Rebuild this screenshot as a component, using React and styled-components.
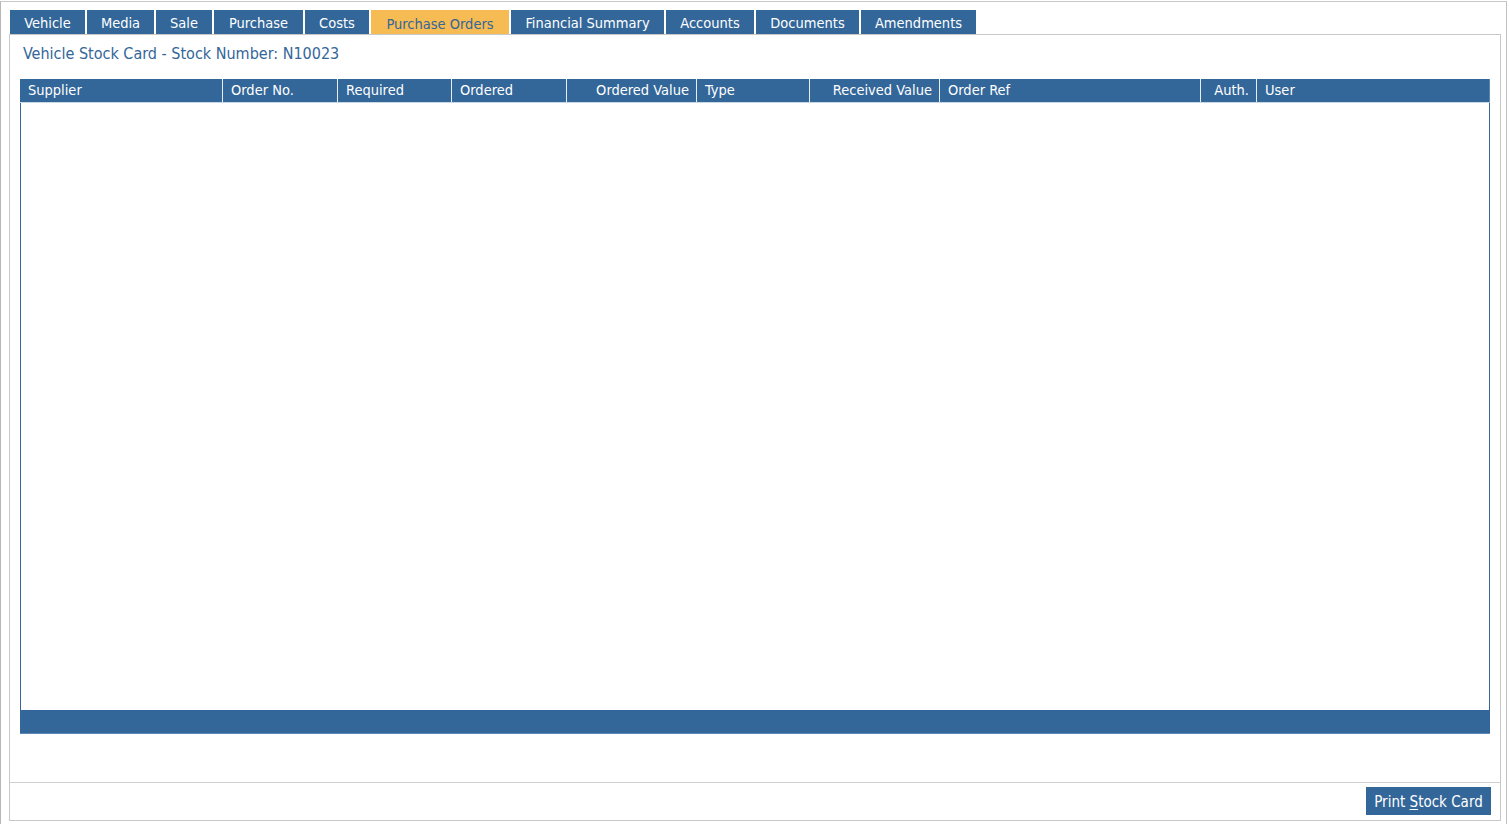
import React from "react";
import styled, { createGlobalStyle } from "styled-components";

const GlobalStyle = createGlobalStyle`
  html, body {
    margin: 0;
    padding: 0;
    background: #ffffff;
  }
  body {
    font-family: "DejaVu Sans Condensed", "DejaVu Sans", Verdana, sans-serif;
    font-size: 14px;
  }
`;

const BLUE = "#336699";
const GREY = "#c8c8c8";

const Frame = styled.div`
  box-sizing: border-box;
  width: 1507px;
  height: 823px;
  margin-top: 1px;
  border-top: 1px solid ${GREY};
  border-left: 1px solid #b8b8b8;
  border-right: 1px solid #c0c0c0;
  padding: 8px 5px 0 8px;
  display: flex;
  flex-direction: column;
`;

const TabStrip = styled.div`
  display: flex;
  padding-left: 1px;
  height: 24px;
`;

const Tab = styled.div`
  box-sizing: border-box;
  height: 24px;
  width: ${p => p.w}px;
  margin-right: 2px;
  display: flex;
  align-items: center;
  justify-content: center;
  font-size: 14.5px;
  color: ${p => (p.active ? BLUE : "#ffffff")};
  background: ${p => (p.active ? "#f7bb53" : BLUE)};
  padding-top: ${p => (p.active ? "3px" : "1px")};
  white-space: nowrap;
`;

const Panel = styled.div`
  box-sizing: border-box;
  flex: 0 0 787px;
  border: 1px solid ${GREY};
  display: flex;
  flex-direction: column;
`;

const Body = styled.div`
  flex: 0 0 748px;
  box-sizing: border-box;
  padding: 0 9px 0 10px;
  display: flex;
  flex-direction: column;
  border-bottom: 1px solid #cfcfcf;
`;

const Title = styled.div`
  height: 44px;
  padding: 9px 0 0 3px;
  box-sizing: border-box;
  font-size: 16px;
  color: ${BLUE};
`;

const Table = styled.div`
  width: 1470px;
  display: flex;
  flex-direction: column;
`;

const HeaderRow = styled.div`
  display: grid;
  grid-template-columns: 203px 115px 114px 115px 130px 113px 130px 261px 56px 233px;
  height: 23px;
  background: ${BLUE};
  border-bottom: 1px solid #c9d6e3;
  border-right: 1px solid #5a88b6;
`;

const HeadCell = styled.div`
  box-sizing: border-box;
  display: flex;
  align-items: center;
  justify-content: ${p => (p.right ? "flex-end" : "flex-start")};
  padding: 0 ${p => (p.right ? "7px" : "4px")} 1px ${p => (p.right ? "4px" : "8px")};
  color: #ffffff;
  font-size: 14.5px;
  white-space: nowrap;
  border-right: ${p => (p.last ? "none" : "1px solid #e6edf4")};
`;

const TableBody = styled.div`
  height: 607px;
  border-left: 1px solid ${BLUE};
  border-right: 1px solid ${BLUE};
  background: #ffffff;
`;

const TableFooter = styled.div`
  height: 23px;
  background: ${BLUE};
  border-bottom: 1px solid #5c89b7;
`;

const Actions = styled.div`
  flex: 1;
  display: flex;
  justify-content: flex-end;
  align-items: flex-start;
  padding: 4px 9px 0 0;
`;

const Button = styled.button`
  width: 125px;
  height: 28px;
  border: none;
  background: ${BLUE};
  color: #ffffff;
  font-family: inherit;
  font-size: 15px;
  padding: 1px 0 0;
  cursor: pointer;

  u {
    text-decoration: underline;
    text-underline-offset: 2px;
  }
`;

const tabs = [
  ["Vehicle", 75],
  ["Media", 67],
  ["Sale", 56],
  ["Purchase", 89],
  ["Costs", 64],
  ["Purchase Orders", 138, true],
  ["Financial Summary", 153],
  ["Accounts", 88],
  ["Documents", 103],
  ["Amendments", 115]
];

const columns = [
  ["Supplier"],
  ["Order No."],
  ["Required"],
  ["Ordered"],
  ["Ordered Value", true],
  ["Type"],
  ["Received Value", true],
  ["Order Ref"],
  ["Auth.", true],
  ["User"]
];

export default function App() {
  return (
    <>
      <GlobalStyle />
      <Frame>
        <TabStrip>
          {tabs.map(([label, w, active]) => (
            <Tab key={label} w={w} active={active}>
              {label}
            </Tab>
          ))}
        </TabStrip>
        <Panel>
          <Body>
            <Title>Vehicle Stock Card - Stock Number: N10023</Title>
            <Table>
              <HeaderRow>
                {columns.map(([label, right], i) => (
                  <HeadCell key={label} right={right} last={i === columns.length - 1}>
                    {label}
                  </HeadCell>
                ))}
              </HeaderRow>
              <TableBody />
              <TableFooter />
            </Table>
          </Body>
          <Actions>
            <Button>
              Print <u>S</u>tock Card
            </Button>
          </Actions>
        </Panel>
      </Frame>
    </>
  );
}
